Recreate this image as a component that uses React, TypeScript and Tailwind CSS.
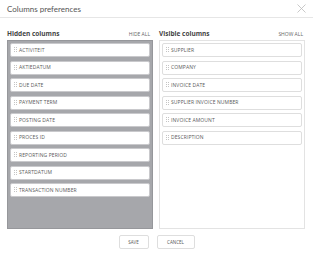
import React from "react";

const hidden = [
  "ACTIVITEIT",
  "AKTIEDATUM",
  "DUE DATE",
  "PAYMENT TERM",
  "POSTING DATE",
  "PROCES ID",
  "REPORTING PERIOD",
  "STARTDATUM",
  "TRANSACTION NUMBER",
];
const visible = [
  "SUPPLIER",
  "COMPANY",
  "INVOICE DATE",
  "SUPPLIER INVOICE NUMBER",
  "INVOICE AMOUNT",
  "DESCRIPTION",
];

function Handle() {
  return (
    <svg width="3" height="6" viewBox="0 0 3 6" className="shrink-0">
      {[0, 2, 4].map((y) => (
        <g key={y}>
          <rect x="0" y={y} width="1" height="1" fill="#c4c4c4" />
          <rect x="2" y={y} width="1" height="1" fill="#c4c4c4" />
        </g>
      ))}
    </svg>
  );
}

function Item({ label, light }: { label: string; light?: boolean }) {
  return (
    <div
      className={`flex items-center h-[14px] bg-white rounded-[2px] border pl-[3px] gap-[2px] ${
        light ? "border-[#dedede]" : "border-[#c9c9cc]"
      }`}
    >
      <Handle />
      <span className="text-[5px] leading-none text-[#5a5a5a] tracking-[0.1px]">{label}</span>
    </div>
  );
}

export default function App() {
  return (
    <div
      className="w-[313px] h-[257px] bg-white flex flex-col"
      style={{ fontFamily: '"Open Sans", sans-serif' }}
    >
      <div className="h-[18px] border-b border-[#e6e6e6] flex items-center justify-between pl-[7px] pr-[7px]">
        <span
          className="text-[8px] text-[#555] leading-none"
          style={{ fontFamily: 'Lato, sans-serif' }}
        >
          Columns preferences
        </span>
        <svg width="9" height="9" viewBox="0 0 9 9">
          <path d="M0.5 0.5 L8.5 8.5 M8.5 0.5 L0.5 8.5" stroke="#bbb" strokeWidth="0.8" />
        </svg>
      </div>
      <div className="flex gap-[6px] pl-[7px] pr-[8px] pt-[10px]">
        <div className="w-[146px] flex flex-col">
          <div className="h-[12px] flex items-center justify-between">
            <span className="text-[6.5px] font-bold text-[#444] leading-none">Hidden columns</span>
            <span className="text-[5px] text-[#666] leading-none pr-[3px]">HIDE ALL</span>
          </div>
          <div className="h-[189px] bg-[#a6a7ab] border border-[#96979b] p-[2px] flex flex-col gap-[3.5px]">
            {hidden.map((h) => (
              <Item key={h} label={h} />
            ))}
          </div>
        </div>
        <div className="w-[146px] flex flex-col">
          <div className="h-[12px] flex items-center justify-between">
            <span className="text-[6.5px] font-bold text-[#444] leading-none">Visible columns</span>
            <span className="text-[5px] text-[#666] leading-none pr-[2px]">SHOW ALL</span>
          </div>
          <div className="h-[189px] bg-white border border-[#e3e3e3] p-[2px] flex flex-col gap-[3.5px]">
            {visible.map((h) => (
              <Item key={h} label={h} light />
            ))}
          </div>
        </div>
      </div>
      <div className="flex justify-center gap-[8px] pt-[6px]">
        <button className="w-[30px] h-[14px] border border-[#dedede] rounded-[2px] text-[4.5px] text-[#555] leading-none">
          SAVE
        </button>
        <button className="w-[38px] h-[14px] border border-[#dedede] rounded-[2px] text-[4.5px] text-[#555] leading-none">
          CANCEL
        </button>
      </div>
    </div>
  );
}
